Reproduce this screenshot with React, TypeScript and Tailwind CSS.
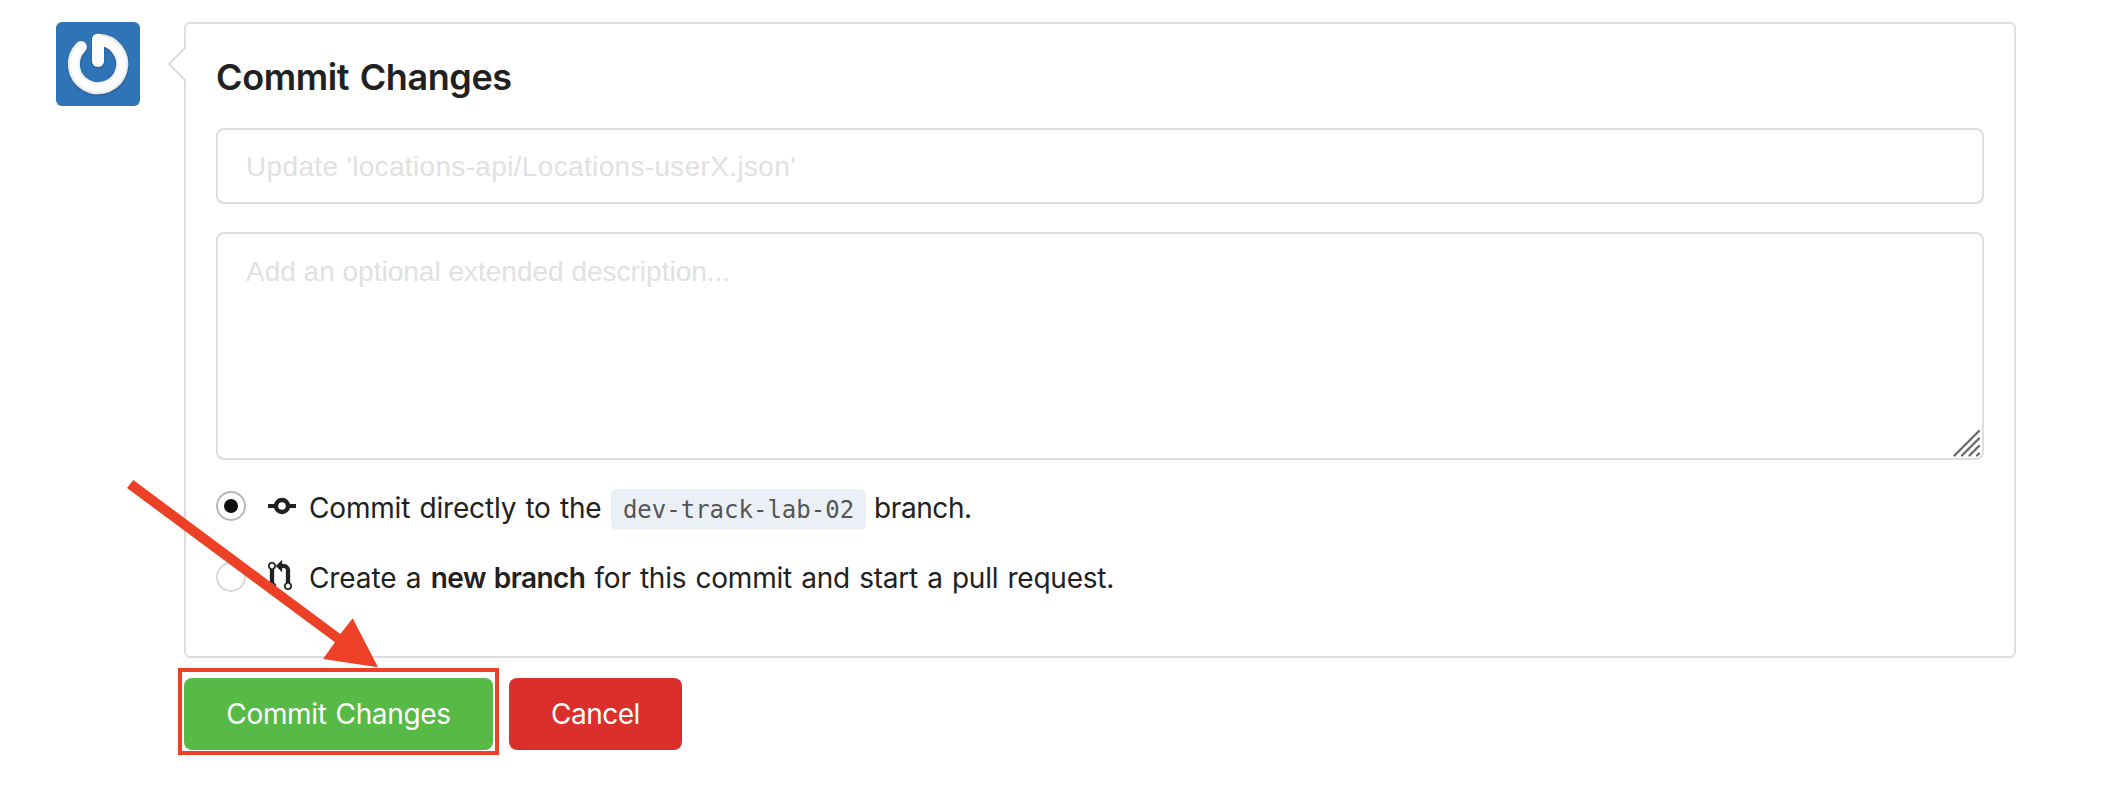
import React from 'react';

function Avatar() {
  return (
    <svg viewBox="0 0 84 84" className="h-[84px] w-[84px] shrink-0 rounded-[6px]">
      <defs>
        <filter id="soft" x="-20%" y="-20%" width="140%" height="140%">
          <feDropShadow dx="0" dy="0.8" stdDeviation="0.9" floodColor="#123f69" floodOpacity="0.6" />
        </filter>
        <radialGradient id="face" gradientUnits="userSpaceOnUse" cx="42" cy="42" r="30.5">
          <stop offset="0.6" stopColor="#f0efee" />
          <stop offset="0.7" stopColor="#ffffff" />
          <stop offset="0.88" stopColor="#fdfdfd" />
          <stop offset="1" stopColor="#dfe0e1" />
        </radialGradient>
      </defs>
      <rect width="84" height="84" fill="#2f74b7" />
      <g filter="url(#soft)" fill="none" strokeWidth="12" strokeLinecap="round" strokeLinejoin="round">
        <path d="M24.9 24.9A24.2 24.2 0 1 0 42 17.8" stroke="url(#face)" />
        <path d="M42 17.8V39" stroke="#fcfcfc" />
      </g>
    </svg>
  );
}

function CommitIcon() {
  return (
    <svg viewBox="0 0 28 32" className="h-8 w-7 shrink-0" fill="none" stroke="#212121">
      <circle cx="14" cy="16" r="6" strokeWidth="4.4" />
      <path d="M0 16H7M21 16H28" strokeWidth="4" />
    </svg>
  );
}

function PullRequestIcon() {
  return (
    <svg viewBox="0 0 12 16" className="h-8 w-6 shrink-0" fill="#212121">
      <path
        fillRule="evenodd"
        stroke="#212121"
        strokeWidth="0.15"
        d="M11 11.28V5c-.03-.78-.34-1.47-.94-2.06C9.46 2.35 8.78 2.03 8 2H7V0L4 3l3 3V4h1c.27.02.48.11.69.31.21.2.3.42.31.69v6.28A1.993 1.993 0 0 0 10 15a1.993 1.993 0 0 0 1-3.72zm-1 2.92c-.66 0-1.2-.55-1.2-1.2 0-.65.55-1.2 1.2-1.2.65 0 1.2.55 1.2 1.2 0 .65-.55 1.2-1.2 1.2zM4 3c0-1.11-.89-2-2-2a1.993 1.993 0 0 0-1 3.72v6.56A1.993 1.993 0 0 0 2 15a1.993 1.993 0 0 0 1-3.72V4.72c.59-.34 1-.98 1-1.72zm-.8 10c0 .66-.55 1.2-1.2 1.2-.65 0-1.2-.55-1.2-1.2 0-.65.55-1.2 1.2-1.2.65 0 1.2.55 1.2 1.2zM2 4.2C1.34 4.2.8 3.65.8 3c0-.65.55-1.2 1.2-1.2.65 0 1.2.55 1.2 1.2 0 .65-.55 1.2-1.2 1.2z"
      />
    </svg>
  );
}

export default function App() {
  return (
    <main className="relative h-[804px] w-[2104px] overflow-hidden bg-white font-['Inter','Noto_Sans',sans-serif] text-[28px] leading-[40px] text-[#212121]">
      <div className="flex gap-11 pl-14 pt-[22px]">
        <Avatar />
        <section className="relative flex h-[636px] w-[1832px] flex-col rounded-[6px] border-2 border-[#dddddd] px-[30px]">
          <svg viewBox="0 0 20 36" className="absolute -left-[18px] top-[22px] h-9 w-5">
            <path d="M17.5 1.5L1 18L17.5 34.5H20V1.5Z" fill="#fff" />
            <path d="M17.5 1.5L1 18L17.5 34.5" fill="none" stroke="#d0d0d1" strokeWidth="1.4" />
          </svg>
          <h1 className="mt-[33px] h-[71px] whitespace-nowrap text-[36px] font-semibold leading-[40px] tracking-[-0.4px] [word-spacing:2px]">
            Commit Changes
          </h1>
          <div className="flex h-[76px] shrink-0 items-center whitespace-nowrap rounded-[8px] border-2 border-[#dddddd] px-7 pt-0.5 font-['Liberation_Sans',sans-serif] tracking-[0.34px] text-[#e1e1e1]">
            Update 'locations-api/Locations-userX.json'
          </div>
          <div className="relative mt-7 h-[228px] shrink-0 whitespace-nowrap rounded-[8px] border-2 border-[#dddddd] px-7 pt-[18px] font-['Liberation_Sans',sans-serif] text-[#e1e1e1]">
            Add an optional extended description...
            <svg
              viewBox="0 0 28 28"
              className="absolute bottom-0 right-0 h-7 w-7 overflow-visible"
              stroke="#6b6b6b"
              strokeWidth="2.4"
              strokeLinecap="round"
            >
              <path d="M0.5 25.5L25 1M8 25.5L25 8.5M15.5 25.5L25 16M23 25.5L25 23.5" />
            </svg>
          </div>
          <label className="mt-[29px] flex h-[41px] shrink-0 items-center whitespace-nowrap [word-spacing:1.5px]">
            <span className="mb-[7px] flex h-[30px] w-[30px] items-center justify-center rounded-full border-2 border-[#b8b8b8]">
              <span className="h-[14px] w-[14px] shrink-0 rounded-full bg-[#0d0d0d]" />
            </span>
            <span className="mb-[7px] ml-[22px] flex w-10"><CommitIcon /></span>
            <span className="mb-[3px] ml-px w-[291px] tracking-[-0.17px]">Commit directly to the</span>
            <code className="ml-[11px] flex h-[41px] w-[255px] shrink-0 items-center justify-center rounded-[6px] bg-[#eaf0f6] font-['DejaVu_Sans_Mono',monospace] text-[24px] text-[#555]">
              dev-track-lab-02
            </code>
            <span className="mb-[3px] ml-2 tracking-[-0.4px]">branch.</span>
          </label>
          <label className="mt-[27px] flex h-[40px] shrink-0 items-center whitespace-nowrap [word-spacing:1.6px]">
            <span className="h-[30px] w-[30px] rounded-full border-2 border-[#d8d8d8]" />
            <span className="mb-0.5 ml-[22px] flex w-10"><PullRequestIcon /></span>
            <span className="ml-px mt-0.5 tracking-[-0.1px]">
              Create a <b className="font-semibold tracking-[-0.6px]">new branch</b>
              <span className="tracking-[-0.23px]"> for this commit and start a pull request.</span>
            </span>
          </label>
        </section>
      </div>
      <div className="ml-[178px] mt-[10px] flex items-start">
        <div className="flex h-[87px] w-[321px] border-4 border-[#ec4127] pl-0.5 pt-1.5">
          <button className="h-[72px] w-[309px] whitespace-nowrap rounded-[8px] bg-[#57ba47] tracking-[-0.35px] text-white [word-spacing:1.5px]">
            Commit Changes
          </button>
        </div>
        <button className="ml-2.5 mt-2.5 h-[72px] w-[173px] rounded-[8px] bg-[#db2f2b] tracking-[-0.5px] text-white">
          Cancel
        </button>
      </div>
      <svg viewBox="120 470 270 200" className="absolute left-[120px] top-[470px] h-[200px] w-[270px]">
        <path d="M133.3 480L340.3 634L352.7 618.3L378 667.3L323 659L335 642.3L127 488Z" fill="#ec4127" />
      </svg>
    </main>
  );
}
